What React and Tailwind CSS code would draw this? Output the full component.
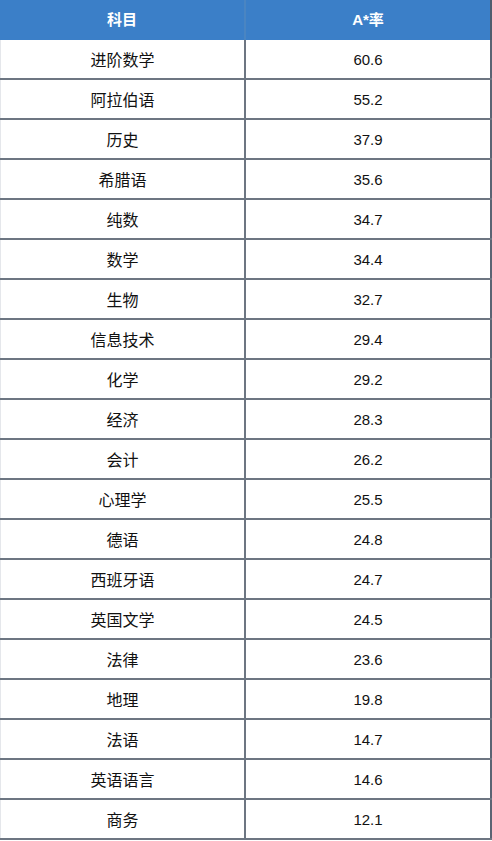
const rows = [
  ["进阶数学", "60.6"],
  ["阿拉伯语", "55.2"],
  ["历史", "37.9"],
  ["希腊语", "35.6"],
  ["纯数", "34.7"],
  ["数学", "34.4"],
  ["生物", "32.7"],
  ["信息技术", "29.4"],
  ["化学", "29.2"],
  ["经济", "28.3"],
  ["会计", "26.2"],
  ["心理学", "25.5"],
  ["德语", "24.8"],
  ["西班牙语", "24.7"],
  ["英国文学", "24.5"],
  ["法律", "23.6"],
  ["地理", "19.8"],
  ["法语", "14.7"],
  ["英语语言", "14.6"],
  ["商务", "12.1"],
];

export default function App() {
  return (
    <div
      className="w-[492px] bg-white"
      style={{ fontFamily: '"Liberation Sans", "Noto Sans CJK SC", sans-serif' }}
    >
      {/* Header */}
      <div className="grid grid-cols-[244px_2px_244px_2px] h-[40px] bg-[#3b7fc8] text-white text-[15px] font-bold">
        <div className="flex items-center justify-center pt-[1px]">科目</div>
        <div className="bg-[#4a85c2]" />
        <div className="flex items-center justify-center pt-[1px]">A*率</div>
        <div className="bg-[#4f5d6e]" />
      </div>

      {/* Body */}
      {rows.map(([name, rate]) => (
        <div
          key={name}
          className="grid grid-cols-[244px_2px_244px_2px] h-[40px] text-[#111] border-b-2 border-[#6d7682]"
        >
          <div className="flex items-center justify-center pt-[3px] text-[16px] border-l border-[#e5e7eb]">{name}</div>
          <div className="bg-[#6d7682]" />
          <div className="flex items-center justify-center pt-[3px] text-[15px]">{rate}</div>
          <div className="bg-[#5a6473]" />
        </div>
      ))}
    </div>
  );
}
